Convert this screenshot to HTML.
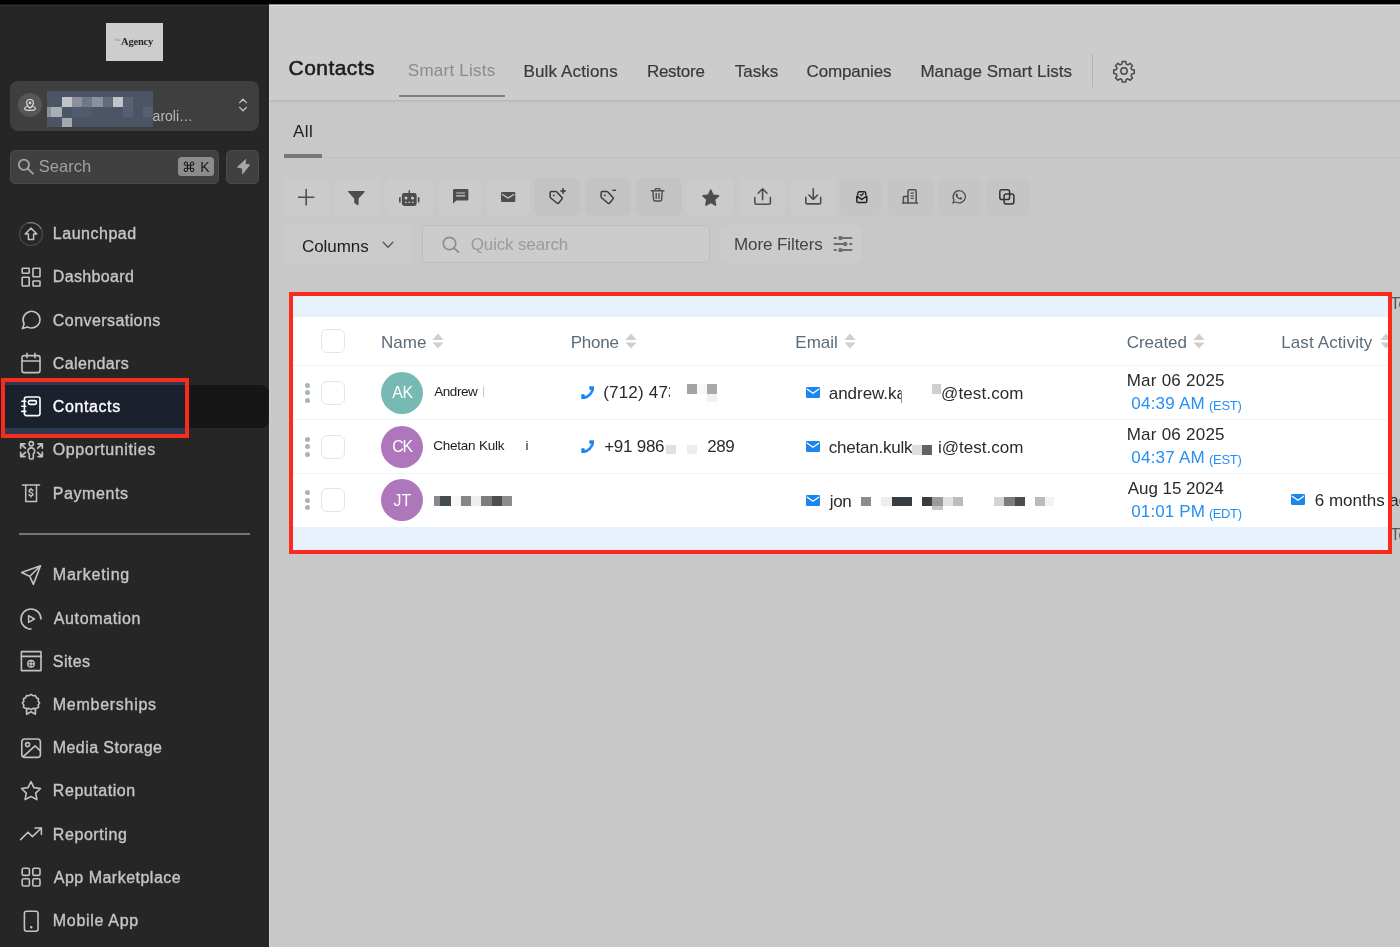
<!DOCTYPE html>
<html lang="en">
<head>
<meta charset="utf-8">
<title>Contacts</title>
<style>
*{box-sizing:border-box;margin:0;padding:0}
html,body{width:1400px;height:947px;overflow:hidden}
body{font-family:"Liberation Sans",sans-serif;background:#c8c8c8;position:relative;color:#1e1e1e}
#wrap{position:absolute;left:0;top:0;width:1400px;height:947px;will-change:transform}
.abs{position:absolute}
#topbar{position:absolute;left:0;top:0;width:1400px;height:4px;background:#000;z-index:50}
/* sidebar */
#side{position:absolute;left:0;top:0;width:269px;height:947px;background:#262626}
#logo{position:absolute;left:106px;top:23px;width:57px;height:38px;background:#cdcdcd;font-family:"Liberation Serif",serif;color:#1f1f1f;text-align:center}
#logo .t{position:absolute;left:15px;top:12.500px;color:#262626;font-size:10.5px;font-weight:bold;letter-spacing:-0.2px;line-height:12px;white-space:nowrap}
#logo .th{position:absolute;left:9px;top:13.500px;font-size:5px;color:#8d8d8d;line-height:6px}
#acct{position:absolute;left:10px;top:80.500px;width:249px;height:50px;background:#3f3f3f;border-radius:8px}
#acct .circ{position:absolute;left:7.800px;top:12px;width:24.500px;height:24.500px;border-radius:50%;background:#565656}
#acct .blur{position:absolute;left:37px;top:10px;width:106px;height:36px;background:#4b5566}
#acct .nm{position:absolute;left:132.500px;top:27px;font-size:14px;color:#b9b9b9;line-height:17px;white-space:nowrap}
#srch{position:absolute;left:10px;top:149.500px;width:209px;height:34px;background:#404040;border:1px solid #4b4b4b;border-radius:5px}
#srch .ph{position:absolute;left:28px;top:5.300px;font-size:16.5px;line-height:20px;color:#a0a0a0}
#srch .kbd{position:absolute;left:167px;top:6.200px;width:36px;height:19.500px;background:#8c8c8c;border-radius:3.500px;color:#161616;font-size:14px;line-height:20px;text-align:center;white-space:nowrap}
#flash{position:absolute;left:226px;top:149.500px;width:33px;height:34px;background:#404040;border:1px solid #4b4b4b;border-radius:5px}
.nav{position:absolute;left:0;width:269px;height:43px;color:#c6c6c6;font-size:16px;line-height:43px;white-space:nowrap}
.nav .lb{position:absolute;left:53px;top:0;-webkit-text-stroke:0.35px currentColor;letter-spacing:0.15px}
.nav svg{position:absolute;left:19px;top:9.500px;width:24px;height:24px;stroke:#c2c2c2;fill:none;stroke-width:1.6;stroke-linecap:round;stroke-linejoin:round}
.nav.act{background:#161616;border-radius:0 8px 8px 0;color:#fff}
.nav.act svg{stroke:#fff}
#sdiv{position:absolute;left:19px;top:533px;width:231px;height:2px;background:#757575}
.hl{position:absolute;border:3px solid #f0281e;z-index:40}
/* main */
#hdr{position:absolute;left:269px;top:4px;width:1131px;height:96px;background:#cccccc;box-shadow:0 1px 3px rgba(0,0,0,0.12)}

#hdr .ttl{position:absolute;left:20px;top:52px;font-size:21px;line-height:24px;color:#1c1c1c;-webkit-text-stroke:0.550px #1c1c1c;white-space:nowrap}
.tab{position:absolute;top:58px;font-size:17px;line-height:20px;color:#3a3a3a;white-space:nowrap;-webkit-text-stroke:0.2px currentColor}
.tab.on{color:#8b8b8b;top:56.500px;-webkit-text-stroke:0}
#hdr .ul{position:absolute;left:130px;top:90.500px;width:106px;height:2px;background:#7d7d7d}
#hdr .sep{position:absolute;left:823px;top:50px;width:1px;height:33px;background:#b3b3b3}
#hdr svg.gear{position:absolute;left:843px;top:55.300px;width:24px;height:24px;fill:none;stroke:#4a4a4a;stroke-width:1.500;stroke-linejoin:round;stroke-linecap:round}
#all{position:absolute;left:293px;top:121.500px;font-size:17px;line-height:20px;color:#222}
#allul{position:absolute;left:284px;top:153.500px;width:38px;height:4px;background:#787878}
#allln{position:absolute;left:284px;top:157px;width:1116px;height:1px;background:#bfbfbf}
.tb{position:absolute;top:177.600px;height:38px;background:#cbcbcb;border-radius:7px}
.tb.dk{background:#c3c3c3}
.tb svg{position:absolute;overflow:visible}
#cols{position:absolute;left:284px;top:225px;width:128px;height:38px;background:#cbcbcb;border-radius:6px}
#cols span{position:absolute;left:19px;top:12px;font-size:17px;line-height:20px;color:#1c1c1c}
#qs{position:absolute;left:422px;top:225px;width:288px;height:38px;background:#cccccc;border:1px solid #bcbcbc;border-radius:5px}
#qs span{position:absolute;left:48px;top:9px;font-size:17px;line-height:20px;color:#9a9a9a;white-space:nowrap}
#mf{position:absolute;left:720px;top:225px;width:142px;height:38px;background:#cbcbcb;border-radius:6px}
#mf span{position:absolute;left:14px;top:9.500px;font-size:17px;line-height:20px;color:#444;white-space:nowrap}
/* table */
#tbl{position:absolute;left:293px;top:296px;width:1095px;height:254px;background:#fff;overflow:hidden}
#tbl .band{position:absolute;left:0;width:1095px;background:#e8f2fc}
#tbl .ln{position:absolute;left:0;width:1095px;height:1.500px;background:#edf3f8}
.th{position:absolute;top:37px;font-size:17px;line-height:20px;color:#5a6b7b;white-space:nowrap}
.srt{position:absolute;top:37px;width:12px;height:16px}
.cb{position:absolute;left:28px;width:24px;height:24px;border:1px solid #dfe4ee;border-radius:6px;background:#fff}
.dots{position:absolute;left:12px;width:5px;height:20px}
.dots i{position:absolute;left:0;width:5px;height:5px;border-radius:50%;background:#aab4b4}
.av{position:absolute;left:88px;width:42px;height:42px;border-radius:50%;color:#fff;font-size:17px;line-height:42px;text-align:center}
.nm2{position:absolute;left:140px;font-size:13.500px;line-height:16px;color:#1c1c1c;white-space:nowrap}
.tx{margin-top:1px;position:absolute;font-size:17px;line-height:20px;color:#2a2a2a;white-space:nowrap}
.bl{color:#2490f3}
.sm{font-size:13px}
.px{position:absolute}
.hl2{position:absolute;left:289px;top:292px;width:1103px;height:262px;border:4px solid #fa2a1c;z-index:30}

#hl1{position:absolute;left:1px;top:378px;width:187.500px;height:60px;border:4px solid #fa2a1c;border-top-width:4.500px;z-index:5}
#hl1 .in{position:absolute;left:0;top:0;width:179.500px;height:51.500px;background:#2d3a4f;overflow:hidden}
#hl1 .act2{position:absolute;left:0;top:2.500px;width:179.500px;height:43px;background:#1a202c}
#hl1 svg{position:absolute;left:14px;top:12px;width:24px;height:24px;stroke:#fff;fill:none;stroke-width:1.600;stroke-linecap:round;stroke-linejoin:round}
#hl1 .lb2{position:absolute;left:48px;top:2.500px;font-size:16px;line-height:43px;color:#fff;-webkit-text-stroke:0.350px #fff;white-space:nowrap}

#tblx{position:absolute;left:293px;top:296px;width:1107px;height:254px}
.tot{position:absolute;left:1097.500px;font-size:16px;line-height:20px;color:#555;white-space:nowrap}
.av{font-size:15.800px}
.av span{position:relative;top:.7px}
</style>
<style id="fit">
#nv1{letter-spacing:0.524px;margin-left:-0.2px}
#nv2{letter-spacing:0.35px;margin-left:-0.2px}
#nv3{letter-spacing:0.433px;margin-left:-0.2px}
#nv4{letter-spacing:0.375px;margin-left:-0.2px}
#nv5{letter-spacing:0.629px;margin-left:-0.4px}
#nv6{letter-spacing:0.6px;margin-left:-0.2px}
#nv7{letter-spacing:0.572px;margin-left:-0.2px}
#nv8{letter-spacing:0.774px;margin-left:-0.2px}
#nv9{letter-spacing:0.622px;margin-left:0.8px}
#nv10{letter-spacing:0.4px;margin-left:-0.2px}
#nv11{letter-spacing:0.72px;margin-left:-0.2px}
#nv12{letter-spacing:0.417px;margin-left:-0.2px}
#nv13{letter-spacing:0.555px;margin-left:-0.2px}
#nv14{letter-spacing:0.575px;margin-left:-0.2px}
#nv15{letter-spacing:0.486px;margin-left:0.8px}
#nv16{letter-spacing:0.689px;margin-left:-0.2px}
#ttl{letter-spacing:0.429px;margin-left:-0.4px}
#t1{letter-spacing:0.24px;margin-left:-1.2px}
#all{letter-spacing:0.4px;margin-left:0.0px}
#colt{letter-spacing:-0.066px;margin-left:-1.0px}
#qst{letter-spacing:-0.163px;margin-left:-0.2px}
#mft{letter-spacing:-0.09px;margin-left:0.0px}
#th1{letter-spacing:0.067px;margin-left:-1.0px}
#th2{letter-spacing:-0.25px;margin-left:-0.8px}
#th3{letter-spacing:0.0px;margin-left:-1.2px}
#th4{letter-spacing:-0.067px;margin-left:-1.2px}
#th5{letter-spacing:0.117px;margin-left:-0.8px}
#n1{letter-spacing:-0.44px;margin-left:1.2px}
#n2{letter-spacing:-0.22px;margin-left:0.2px}
#p2a{letter-spacing:-0.267px;margin-left:-0.2px}
#p2b{letter-spacing:-0.4px;margin-left:-0.2px}
#e1b{letter-spacing:0.124px;margin-left:-1.0px}
#e2a{letter-spacing:-0.22px;margin-left:-0.2px}
#e2b{letter-spacing:0.022px;margin-left:-1.0px}
#e3a{letter-spacing:-0.3px;margin-left:0.8px}
#c1a{letter-spacing:0.24px;margin-left:-1.2px}
#c1b{letter-spacing:0.228px;margin-left:-0.8px}
#c1c{letter-spacing:-0.25px;margin-left:-0.4px}
#c2a{letter-spacing:0.24px;margin-left:-1.2px}
#c2b{letter-spacing:0.228px;margin-left:-0.8px}
#c2c{letter-spacing:-0.25px;margin-left:-0.4px}
#c3a{letter-spacing:-0.04px;margin-left:-0.2px}
#c3b{letter-spacing:0.114px;margin-left:-0.8px}
#c3c{letter-spacing:-0.4px;margin-left:-0.4px}
#sph{letter-spacing:0.0px;margin-left:-0.2px}
#t2{letter-spacing:0.145px;margin-left:-1.0px}
#t3{letter-spacing:-0.266px;margin-left:-0.6px}
#t4{letter-spacing:0.05px;margin-left:0.2px}
#t5{letter-spacing:-0.125px;margin-left:-1.0px}
#t6{letter-spacing:0.024px;margin-left:-0.6px}
#nv5b{letter-spacing:0.6px;margin-left:-0.2px}
#p1{letter-spacing:0.2px;margin-left:-1.2px}
#e1a{letter-spacing:-0.025px;margin-left:-0.2px}
#la3{letter-spacing:0.0px;margin-left:-0.2px}
#av1{letter-spacing:-0.2px;margin-left:1px}
#av2{letter-spacing:-1.2px;margin-left:0px}
#av3{letter-spacing:0.2px;margin-left:0.8px}
</style>
</head>
<body>
<div id="wrap">
<div id="side">
  <div id="logo"><span class="th">the</span><span class="t">Agency</span></div>
  <div id="acct">
    <div class="circ"></div>
    <svg class="px" viewBox="0 0 12 12" style="left:14px;top:18.800px;width:12px;height:12px;fill:none;stroke:#dadada;stroke-width:1.150;stroke-linejoin:round;stroke-linecap:round"><path d="M6 9.300C6 9.300 9.400 6.400 9.400 3.900a3.400 3.400 0 0 0-6.800 0C2.600 6.400 6 9.300 6 9.300z"/><circle cx="6" cy="3.900" r=".8" fill="#dadada"/><path d="M3.300 7.500C1.700 7.900.6 8.600.6 9.400c0 1.200 2.400 2 5.400 2s5.400-.8 5.400-2c0-.8-1.100-1.500-2.700-1.900"/></svg>
    <div class="nm" id="anm">Caroli…</div>
    <div class="blur"></div><i class="px" style="left:51.6px;top:16.2px;width:10.4px;height:10.6px;background:#c2c4ca"></i><i class="px" style="left:62.0px;top:16.2px;width:10.0px;height:10.6px;background:#8b909c"></i><i class="px" style="left:72.0px;top:16.2px;width:10.0px;height:10.6px;background:#70778a"></i><i class="px" style="left:82.0px;top:16.2px;width:10.5px;height:10.6px;background:#8b909c"></i><i class="px" style="left:92.5px;top:16.2px;width:10.5px;height:10.6px;background:#626a7b"></i><i class="px" style="left:103.0px;top:16.2px;width:10.0px;height:10.6px;background:#c2c4ca"></i><i class="px" style="left:113.0px;top:16.2px;width:10.0px;height:10.6px;background:#596174"></i><i class="px" style="left:37.0px;top:26.8px;width:4.0px;height:10.2px;background:#8c919d"></i><i class="px" style="left:41.0px;top:26.8px;width:10.6px;height:10.2px;background:#a9adb6"></i><i class="px" style="left:62.0px;top:26.8px;width:20.0px;height:10.2px;background:#515b6c"></i><i class="px" style="left:113.0px;top:26.8px;width:10.0px;height:10.2px;background:#566072"></i><i class="px" style="left:133.0px;top:26.8px;width:10.0px;height:10.2px;background:#566072"></i><i class="px" style="left:51.6px;top:37.0px;width:10.4px;height:9.0px;background:#a4a8b1"></i>
    <svg class="px" viewBox="0 0 10 16" style="left:227.500px;top:16px;width:10px;height:16px;fill:none;stroke:#c4c4c4;stroke-width:1.300;stroke-linecap:round;stroke-linejoin:round"><path d="M1.600 5.600 5 2.200l3.400 3.400M1.600 10.400 5 13.800l3.400-3.400"/></svg>
  </div>
  <div id="srch"><svg class="px" viewBox="0 0 17 17" style="left:6px;top:7.500px;width:17px;height:17px;fill:none;stroke:#a6a6a6;stroke-width:1.800;stroke-linecap:round"><circle cx="6.900" cy="6.800" r="5.100"/><path d="M10.700 10.700 16 15.700"/></svg><span class="ph" id="sph">Search</span><span class="kbd">⌘ K</span></div>
  <div id="flash"><svg class="px" viewBox="0 0 13 15.500" style="left:9.500px;top:8.300px;width:13px;height:15.500px"><path d="M8.600.600 .4 8.200 5.400 9.200 5.500 14.900 12.700 5.900 8.100 5z" fill="#a9a9a9" stroke="#a9a9a9" stroke-width=".8" stroke-linejoin="round"/></svg></div>

  <div class="nav" style="top:212px"><svg viewBox="0 0 24 24"><circle cx="12" cy="12" r="11.4" stroke="#4b4b4b" stroke-width="1.2"/><path d="M9 1A11.4 11.4 0 0 1 21.900 6.400" stroke="#7c7c7c" stroke-width="1.2"/><path d="M12 6 6.200 12h3.200v5.600h5.200V12h3.200z" stroke-width="1.500"/></svg><span class="lb" id="nv1">Launchpad</span></div>
  <div class="nav" style="top:255.25px"><svg viewBox="0 0 24 24"><rect x="3.2" y="3.2" width="7" height="5" rx=".6"/><rect x="14" y="3.2" width="7" height="8.6" rx=".6"/><rect x="3.2" y="12.2" width="7" height="8.8" rx=".6"/><rect x="14" y="16" width="7" height="5" rx=".6"/></svg><span class="lb" id="nv2">Dashboard</span></div>
  <div class="nav" style="top:298.5px"><svg viewBox="0 0 24 24"><path d="M21 11.5a8.5 8.5 0 0 1-12.6 7.4L3.4 20.6l1.7-4.6A8.5 8.5 0 1 1 21 11.5z"/></svg><span class="lb" id="nv3">Conversations</span></div>
  <div class="nav" style="top:341.75px"><svg viewBox="0 0 24 24"><rect x="3" y="4.6" width="18" height="17" rx="2.2"/><path d="M3 10h18M8 2.4v4.4M16 2.4v4.4"/></svg><span class="lb" id="nv4">Calendars</span></div>
  <div class="nav act" style="top:385px"><svg viewBox="0 0 24 24"><rect x="5.4" y="3" width="15.6" height="18.6" rx="2"/><rect x="9.4" y="6.6" width="8" height="3.8" rx="1.6"/><path d="M2.8 7.2h4M2.8 12.3h4M2.8 17.4h4"/></svg><span class="lb" id="nv5">Contacts</span></div>
  <div class="nav" style="top:428.25px"><svg viewBox="0 0 24 24" style="stroke-width:1.600;overflow:visible"><circle cx="12.300" cy="5.800" r="2.150"/><path d="M8.900 13.300a3.400 3.400 0 0 1 6.800 0c0 1.200-.6 2-1.400 2.600v4.100c0 .6-.4 1-1 1h-2c-.6 0-1-.4-1-1v-4.100c-.8-.6-1.400-1.400-1.400-2.600z"/><path d="M1.700 10V5.800h4.200M2 6.100 6.400 10.200M23.300 10V5.800h-4.200M23 6.100 18.600 10.200M1.700 14.400v4.200h4.200M2 18.300 6.400 14.400M23.300 14.400v4.200h-4.200M23 18.300 18.600 14.400" stroke-width="1.750"/></svg><span class="lb" id="nv6">Opportunities</span></div>
  <div class="nav" style="top:471.5px"><svg viewBox="0 0 24 24" style="stroke-width:1.5"><path d="M3.400 4h17.200M6.700 4.400v16h10.800v-16"/><path d="M13.800 9.600c-.4-.8-1.100-1.100-1.900-1.100-1 0-1.800.6-1.800 1.500 0 2.200 3.800 1.100 3.800 3.300 0 .9-.9 1.500-1.900 1.500-.9 0-1.600-.4-2-1.200M12 7.400v1.100M12 14.800v1.100"/></svg><span class="lb" id="nv7">Payments</span></div>
  <div id="hl1"><div class="in"><div class="act2"></div><svg viewBox="0 0 24 24"><rect x="5.400" y="3" width="15.600" height="18.600" rx="2"/><rect x="9.400" y="6.600" width="8" height="3.800" rx="1.600"/><path d="M2.800 7.200h4M2.800 12.300h4M2.800 17.400h4"/></svg><span class="lb2" id="nv5b">Contacts</span></div></div>
  <div id="sdiv"></div>
  <div class="nav" style="top:553px"><svg viewBox="0 0 24 24"><path d="M21.500 2.800 2.600 9.600l8.100 3.600 3.700 8.200zM21.300 3 10.800 13.200"/></svg><span class="lb" id="nv8">Marketing</span></div>
  <div class="nav" style="top:597px"><svg viewBox="0 0 24 24"><path d="M22 12A10 10 0 0 0 12 2 10 10 0 0 0 2 12a10 10 0 0 0 10 10"/><path d="M9.600 8.600v6.800l5.800-3.400z" stroke-width="1.5"/></svg><span class="lb" id="nv9">Automation</span></div>
  <div class="nav" style="top:639.5px"><svg viewBox="0 0 24 24"><rect x="2.400" y="2.600" width="19.600" height="19" rx=".4"/><path d="M2.400 7.400h19.600"/><circle cx="12" cy="14.800" r="3.300" stroke-width="1.300"/><path d="M8.700 14.800h6.600M12 11.500v6.600" stroke-width="1.300"/></svg><span class="lb" id="nv10">Sites</span></div>
  <div class="nav" style="top:682.75px"><svg viewBox="0 0 24 24"><path d="M12 2.400l2 1.300 2.400-.2 1 2.200 2.100 1.100-.3 2.400L20.600 11l-1.400 1.900.3 2.400-2.100 1.100-1 .2-2.400-.2-2 1.300-2-1.300-2.400.2-1-.2-2.100-1.100.3-2.400L3.400 11l1.400-1.800-.3-2.400 2.100-1.100 1-2.200 2.400.2z"/><path d="M7.600 16.800v5.400l4.400-2.400 4.400 2.400v-5.400"/></svg><span class="lb" id="nv11">Memberships</span></div>
  <div class="nav" style="top:726px"><svg viewBox="0 0 24 24"><rect x="2.800" y="3" width="18.600" height="18.400" rx="3"/><circle cx="8.600" cy="8.600" r="2"/><path d="M4.600 20.400 16 9.800l5.400 5"/></svg><span class="lb" id="nv12">Media Storage</span></div>
  <div class="nav" style="top:769.25px"><svg viewBox="0 0 24 24"><path d="M12 2.600l2.900 6 6.600.9-4.800 4.600 1.200 6.500L12 17.500l-5.900 3.100 1.200-6.500L2.500 9.500l6.600-.9z"/></svg><span class="lb" id="nv13">Reputation</span></div>
  <div class="nav" style="top:812.5px"><svg viewBox="0 0 24 24"><path d="M1.600 17.600 9 10.200l4.400 4.400L22.400 6M16 6h6.400v6.400"/></svg><span class="lb" id="nv14">Reporting</span></div>
  <div class="nav" style="top:855.75px"><svg viewBox="0 0 24 24"><rect x="3.200" y="3.200" width="7.200" height="7.200" rx="1.400"/><rect x="13.800" y="3.200" width="7.200" height="7.200" rx="1.400"/><rect x="3.200" y="13.800" width="7.200" height="7.200" rx="1.400"/><rect x="13.800" y="13.800" width="7.200" height="7.200" rx="1.400"/></svg><span class="lb" id="nv15">App Marketplace</span></div>
  <div class="nav" style="top:899px"><svg viewBox="0 0 24 24"><rect x="5.400" y="2.200" width="13.600" height="20" rx="2.200"/><path d="M12.200 18.200h.01" stroke-width="2.400"/></svg><span class="lb" id="nv16">Mobile App</span></div>
</div>

<div id="hdr">
  <div class="ttl" id="ttl">Contacts</div>
  <div class="tab on" id="t1" style="left:140px">Smart Lists</div>
  <div class="tab" id="t2" style="left:255.500px">Bulk Actions</div>
  <div class="tab" id="t3" style="left:378.500px">Restore</div>
  <div class="tab" id="t4" style="left:465.500px">Tasks</div>
  <div class="tab" id="t5" style="left:538.500px">Companies</div>
  <div class="tab" id="t6" style="left:652px">Manage Smart Lists</div>
  <div class="ul"></div>
  <div class="sep"></div>
  <svg class="gear" viewBox="0 0 24 24"><circle cx="12" cy="12" r="3.200"/><path d="M10.300 2.500h3.400l.5 2.600 1.700.7 2.200-1.500 2.400 2.400-1.500 2.200.7 1.700 2.600.5v3.400l-2.600.5-.7 1.700 1.500 2.200-2.400 2.400-2.200-1.500-1.700.7-.5 2.600h-3.400l-.5-2.600-1.700-.7-2.200 1.500-2.400-2.400 1.500-2.200-.7-1.700-2.600-.5v-3.400l2.600-.5.7-1.700-1.500-2.200 2.400-2.400 2.200 1.500 1.700-.7z"/></svg>
</div>
<div id="all">All</div>
<div id="allln"></div>
<div id="allul"></div>
<div id="toolbar">
  <div class="tb" id="b1" style="left:283.5px;width:46.0px;background:#cbcbcb"><svg viewBox="0 0 16 16" style="left:14.5px;top:11.1px;width:16.4px;height:16.4px"><path d="M8 0v16M0 8h16" stroke="#4d4d4d" stroke-width="1.500" fill="none"/></svg></div>
  <div class="tb" id="b2" style="left:334.0px;width:46.3px;background:#cbcbcb"><svg viewBox="0 0 17 14.500" style="left:14.2px;top:13.0px;width:16.8px;height:14.4px"><path d="M.6 0h15.800c.5 0 .7.500.4.900L10.700 7.600v5.900c0 .7-.7 1.100-1.300.7L6.800 12.400c-.3-.2-.5-.5-.5-.9V7.600L.2.900C-.1.500.1 0 .6 0z" fill="#4d4d4d"/></svg></div>
  <div class="tb" id="b3" style="left:384.5px;width:48.7px;background:#cbcbcb"><svg viewBox="0 0 20.500 16" style="left:14.3px;top:12.4px;width:20.5px;height:16.0px"><path d="M10.250 0a.7.700 0 0 1 .7.700V3h4.300a2.400 2.400 0 0 1 2.400 2.400v8.200a2.400 2.400 0 0 1-2.400 2.400h-10a2.400 2.400 0 0 1-2.400-2.400V5.400A2.400 2.400 0 0 1 5.250 3h4.300V.7a.7.700 0 0 1 .7-.7z" fill="#4d4d4d"/><rect x="0" y="7" width="1.700" height="5.500" rx=".85" fill="#4d4d4d"/><rect x="18.800" y="7" width="1.700" height="5.500" rx=".85" fill="#4d4d4d"/><circle cx="7" cy="8" r="1.500" fill="#cbcbcb"/><circle cx="13.500" cy="8" r="1.500" fill="#cbcbcb"/><path d="M6 12.400h1.600M9.450 12.400h1.600M12.900 12.400h1.600" stroke="#cbcbcb" stroke-width="1.300"/></svg></div>
  <div class="tb" id="b4" style="left:438.0px;width:44.4px;background:#cbcbcb"><svg viewBox="0 0 15.400 14.800" style="left:14.7px;top:11.4px;width:15.4px;height:14.8px"><path d="M1.400 0h12.600c.8 0 1.400.6 1.400 1.400v8.800c0 .8-.6 1.400-1.400 1.400H3.200L0 14.800V1.400C0 .6.600 0 1.400 0z" fill="#4d4d4d"/><path d="M3.200 4h9M3.200 6.800h9" stroke="#cbcbcb" stroke-width="1.200"/></svg></div>
  <div class="tb" id="b5" style="left:487.0px;width:42.8px;background:#cbcbcb"><svg viewBox="0 0 14.300 10" style="left:14.0px;top:14.8px;width:14.3px;height:10.0px"><rect width="14.300" height="10" rx="1.300" fill="#4d4d4d"/><path d="M1 2.200 7.150 6l6.150-3.800" fill="none" stroke="#cbcbcb" stroke-width="1.300"/></svg></div>
  <div class="tb" id="b6" style="left:534.0px;width:46.1px;background:#c3c3c3"><svg viewBox="0 0 17 17" style="left:15.0px;top:10.4px;width:17px;height:17px"><path d="M1.100 5Q1.100 3.600 2.500 3.550L6.600 3.400Q7.200 3.400 7.600 3.800L13 9.500Q13.600 10.200 13 10.900L9.500 15.200Q8.800 15.900 8.100 15.300L1.500 9.700Q1.100 9.400 1.100 8.800Z" fill="none" stroke="#3a3a3a" stroke-width="1.500" stroke-linejoin="round"/><circle cx="4.800" cy="7.300" r=".9" fill="#3a3a3a"/><path d="M14.100.300v5.400M11.400 3h5.400" stroke="#3a3a3a" stroke-width="1.600" fill="none"/></svg></div>
  <div class="tb" id="b7" style="left:585.3px;width:45.9px;background:#c3c3c3"><svg viewBox="0 0 17 17" style="left:14.5px;top:10.4px;width:17px;height:17px"><path d="M1.100 5Q1.100 3.600 2.500 3.550L6.600 3.400Q7.200 3.400 7.600 3.800L13 9.500Q13.600 10.200 13 10.900L9.500 15.200Q8.800 15.900 8.100 15.300L1.500 9.700Q1.100 9.400 1.100 8.800Z" fill="none" stroke="#3a3a3a" stroke-width="1.500" stroke-linejoin="round"/><circle cx="4.800" cy="7.300" r=".9" fill="#3a3a3a"/><path d="M12.200 2.300h3.800" stroke="#3a3a3a" stroke-width="1.300" fill="none"/></svg></div>
  <div class="tb" id="b8" style="left:635.8px;width:46.5px;background:#c3c3c3"><svg viewBox="0 0 13.200 13.600" style="left:15.2px;top:10.7px;width:13.2px;height:13.6px"><path d="M.2 2.800h12.800M4.300 2.600V1.200c0-.4.300-.6.600-.6h3.400c.3 0 .6.200.6.600v1.400M1.900 3l.7 8.800c.1.700.6 1.200 1.300 1.200h5.400c.7 0 1.200-.5 1.300-1.200L11.300 3M5.200 5.400v5M8 5.400v5" fill="none" stroke="#4d4d4d" stroke-width="1.400" stroke-linecap="round"/></svg></div>
  <div class="tb" id="b9" style="left:687.0px;width:47.3px;background:#cbcbcb"><svg viewBox="0 0 17.500 17.100" style="left:15.3px;top:11.7px;width:17.5px;height:17.1px"><path d="M8.750.3c.3 0 .6.200.7.500l2.100 4.600 5 .6c.7.100 1 .9.500 1.400l-3.700 3.400 1 5c.1.700-.6 1.200-1.200.9l-4.400-2.500-4.400 2.500c-.6.300-1.300-.2-1.200-.9l1-5L.45 7.400c-.5-.5-.2-1.300.5-1.400l5-.6L8.050.8c.1-.3.400-.5.700-.5z" fill="#4d4d4d"/></svg></div>
  <div class="tb" id="b10" style="left:739.5px;width:45.8px;background:#cbcbcb"><svg viewBox="0 0 17.200 17.100" style="left:14.3px;top:10.7px;width:17.2px;height:17.1px"><path d="M.8 9.600v5.200c0 .8.700 1.500 1.500 1.500h12.600c.8 0 1.500-.7 1.500-1.500V9.600M8.600 11.800V1M4.200 5.200 8.600.8 13 5.200" fill="none" stroke="#4d4d4d" stroke-width="1.600" stroke-linecap="round" stroke-linejoin="round"/></svg></div>
  <div class="tb" id="b11" style="left:790.2px;width:45.5px;background:#cbcbcb"><svg viewBox="0 0 16.500 16.700" style="left:14.5px;top:10.7px;width:16.5px;height:16.7px"><path d="M.8 9.400v5c0 .8.700 1.500 1.500 1.500h11.900c.8 0 1.500-.7 1.500-1.500v-5M8.250.8v10.400M3.900 7l4.350 4.400L12.600 7" fill="none" stroke="#4d4d4d" stroke-width="1.600" stroke-linecap="round" stroke-linejoin="round"/></svg></div>
  <div class="tb" id="b12" style="left:840.4px;width:41.7px;background:#c5c5c5"><svg viewBox="0 0 11.600 12.400" style="left:15.2px;top:13.4px;width:11.6px;height:12.4px"><path d="M1.800 4.600V2.400c0-.9.700-1.600 1.600-1.600h4.800c.9 0 1.600.7 1.600 1.600v2.200" fill="none" stroke="#222" stroke-width="1.400"/><path d="M.8 5.200v5c0 .8.600 1.400 1.400 1.400h7.200c.8 0 1.400-.6 1.400-1.400v-5L5.800 8.400z" fill="none" stroke="#222" stroke-width="1.500" stroke-linejoin="round"/><path d="M4.100 3.400 5.400 4.700 7.700 2.300" fill="none" stroke="#222" stroke-width="1.300"/></svg></div>
  <div class="tb" id="b13" style="left:887.7px;width:46.1px;background:#c5c5c5"><svg viewBox="0 0 16.100 14.600" style="left:14.7px;top:11.2px;width:16.1px;height:14.6px"><path d="M0 13.900h16.100M1.400 13.800V8.200c0-.4.300-.8.700-.8h3.800v6.400M6 13.800V2.200c0-.8.600-1.400 1.400-1.400h5.400c.8 0 1.400.6 1.400 1.400v11.600" fill="none" stroke="#4d4d4d" stroke-width="1.500"/><path d="M8.600 4.200h3.200M8.600 6.800h3.200M8.600 9.400h3.200" stroke="#4d4d4d" stroke-width="1.300"/></svg></div>
  <div class="tb" id="b14" style="left:938.2px;width:42.4px;background:#c5c5c5"><svg viewBox="0 0 14 13.800" style="left:14.3px;top:12.4px;width:14.0px;height:13.8px"><path d="M7.200.7a6.100 6.100 0 0 0-5.200 9.300L.9 13l3.200-1a6.100 6.100 0 1 0 3.100-11.300z" fill="none" stroke="#4d4d4d" stroke-width="1.300" stroke-linejoin="round"/><path d="M5.300 3.800c-.2-.4-.4-.4-.6-.4-.5 0-1.100.6-1.100 1.500 0 1 .7 2 1.300 2.700.7.800 1.700 1.600 3 2 .9.300 1.600 0 2-.5.200-.3.300-.8.200-1-.1-.2-1.300-.8-1.500-.8-.2 0-.4.500-.7.700-.2.100-.4 0-.8-.2-.5-.3-1.300-1-1.600-1.700-.1-.3.400-.6.500-.9.100-.2-.4-1.100-.7-1.400z" fill="#4d4d4d"/></svg></div>
  <div class="tb" id="b15" style="left:985.8px;width:44.0px;background:#c5c5c5"><svg viewBox="0 0 15.700 15.700" style="left:13.7px;top:11.4px;width:15.7px;height:15.7px"><rect x=".8" y=".8" width="9.800" height="9.800" rx="2.200" fill="none" stroke="#333" stroke-width="1.500"/><rect x="5.100" y="5.100" width="9.800" height="9.800" rx="2.200" fill="none" stroke="#333" stroke-width="1.500"/></svg></div>
</div>
<div id="cols"><span id="colt">Columns</span><svg class="px" viewBox="0 0 12 8" style="left:98px;top:16px;width:12px;height:8px;fill:none;stroke:#555;stroke-width:1.300;stroke-linecap:round;stroke-linejoin:round"><path d="M1.200 1.300 6 6.300l4.800-5"/></svg></div>
<div id="qs"><svg class="px" viewBox="0 0 18 17" style="left:18.500px;top:10px;width:18px;height:17px;fill:none;stroke:#8d8d8d;stroke-width:1.700;stroke-linecap:round"><circle cx="7.500" cy="7.500" r="6.200"/><path d="M12.100 12.100 16.400 16"/></svg><span id="qst">Quick search</span></div>
<div id="mf"><span id="mft">More Filters</span><svg class="px" viewBox="0 0 20 16" style="left:112.700px;top:11.300px;width:20px;height:16px;fill:#6e6e6e;stroke:#6e6e6e;stroke-width:2;stroke-linecap:round"><path d="M1.500 2h1.500M7.500 2h11M1.500 8h11M17 8h1.500M1.500 14.100h1.500M7.500 14.100h11" fill="none"/><circle cx="7.400" cy="2" r="1.500" stroke-width="1.400"/><circle cx="12.300" cy="8" r="1.500" stroke-width="1.400"/><circle cx="7.400" cy="14.100" r="1.500" stroke-width="1.400"/></svg></div>

<div id="tbl">
  <div class="band" style="top:0;height:21px"></div>
  <div class="band" style="top:230.600px;height:24px"></div>
  <div class="ln" style="top:68.500px"></div>
  <div class="ln" style="top:122.500px"></div>
  <div class="ln" style="top:176.500px"></div>
  <div class="cb" style="top:33px"></div>
  <div class="th" id="th1" style="left:89px">Name</div>
  <div class="th" id="th2" style="left:278.500px">Phone</div>
  <div class="th" id="th3" style="left:503.500px">Email</div>
  <div class="th" id="th4" style="left:835px">Created</div>
  <div class="th" id="th5" style="left:989px">Last Activity</div>
<div class="dots" style="top:86.6px"><i style="top:0"></i><i style="top:7.500px"></i><i style="top:15px"></i></div><div class="cb" style="top:84.6px"></div><div class="av" style="top:75.6px;background:#76bab3"><span id="av1">AK</span></div><span class="nm2" id="n1" style="top:88.1px">Andrew</span><i class="px" style="left:190.2px;top:90.0px;width:1.0px;height:11.0px;background:#c9c9c9"></i><svg class="px" viewBox="0 0 13.500 13.500" style="left:287.800px;top:89.7px;width:13.500px;height:13.500px"><path d="M13.300.700A13.300 13.300 0 0 1 .700 13.300L.500 8.800A8.800 8.800 0 0 0 3 8.300L3.900 10.600A11.300 11.300 0 0 0 10.600 3.900L8.300 3A8.800 8.800 0 0 0 8.800.500Z" fill="#1a86f5" stroke="#1a86f5" stroke-width=".6" stroke-linejoin="round"/></svg><span class="tx" id="p1" style="left:311.4px;top:86.3px;width:67px;overflow:hidden">(712) 473</span><i class="px" style="left:393.6px;top:88.0px;width:10.4px;height:9.6px;background:#a3a3a3"></i><i class="px" style="left:404.0px;top:88.0px;width:10.0px;height:9.6px;background:#f8f8f8"></i><i class="px" style="left:414.0px;top:88.0px;width:10.0px;height:9.6px;background:#a9a9a9"></i><i class="px" style="left:414.0px;top:97.6px;width:10.0px;height:8.4px;background:#f0f0f0"></i><svg class="px" viewBox="0 0 14 11" style="left:512.5px;top:91.1px;width:14px;height:11px"><rect width="14" height="11" rx="1.300" fill="#1c86f0"/><path d="M1.300 2.200 7 6.200l5.700-4" fill="none" stroke="#fff" stroke-width="1.300" stroke-linecap="round" stroke-linejoin="round"/></svg><span class="tx" id="e1a" style="left:535.9px;top:86.7px;width:72.400px;overflow:hidden">andrew.ka</span><i class="px" style="left:608.0px;top:95.0px;width:1.0px;height:12.0px;background:#8a8a8a"></i><i class="px" style="left:639.4px;top:87.7px;width:8.5px;height:9.9px;background:#cfcfcf"></i><span class="tx" id="e1b" style="left:649.0px;top:86.7px;">@test.com</span><span class="tx" id="c1a" style="left:834.9px;top:74.2px;">Mar 06 2025</span><span class="tx bl" id="c1b" style="left:839.1px;top:97.4px;">04:39 AM</span><span class="tx bl sm" id="c1c" style="left:916.3px;top:98.8px">(EST)</span><div class="dots" style="top:140.5px"><i style="top:0"></i><i style="top:7.500px"></i><i style="top:15px"></i></div><div class="cb" style="top:138.5px"></div><div class="av" style="top:129.5px;background:#ae76bb"><span id="av2">CK</span></div><span class="nm2" id="n2" style="top:142.0px">Chetan Kulk</span><span class="nm2" id="n2b" style="left:232.500px;top:142.0px">i</span><svg class="px" viewBox="0 0 13.500 13.500" style="left:287.800px;top:143.6px;width:13.500px;height:13.500px"><path d="M13.300.700A13.300 13.300 0 0 1 .700 13.300L.500 8.800A8.800 8.800 0 0 0 3 8.300L3.900 10.600A11.300 11.300 0 0 0 10.600 3.900L8.300 3A8.800 8.800 0 0 0 8.800.500Z" fill="#1a86f5" stroke="#1a86f5" stroke-width=".6" stroke-linejoin="round"/></svg><span class="tx" id="p2a" style="left:311.4px;top:140.2px;">+91 986</span><i class="px" style="left:372.6px;top:149.0px;width:10.4px;height:8.6px;background:#e0e0e0"></i><i class="px" style="left:393.6px;top:149.0px;width:10.4px;height:8.6px;background:#ededed"></i><span class="tx" id="p2b" style="left:414.4px;top:140.2px;">289</span><svg class="px" viewBox="0 0 14 11" style="left:512.5px;top:145.0px;width:14px;height:11px"><rect width="14" height="11" rx="1.300" fill="#1c86f0"/><path d="M1.300 2.200 7 6.200l5.700-4" fill="none" stroke="#fff" stroke-width="1.300" stroke-linecap="round" stroke-linejoin="round"/></svg><span class="tx" id="e2a" style="left:535.9px;top:140.6px;">chetan.kulk</span><i class="px" style="left:618.8px;top:149.4px;width:9.8px;height:9.6px;background:#dedede"></i><i class="px" style="left:628.6px;top:149.4px;width:10.8px;height:9.6px;background:#636363"></i><span class="tx" id="e2b" style="left:646.0px;top:140.6px;">i@test.com</span><span class="tx" id="c2a" style="left:834.9px;top:128.1px;">Mar 06 2025</span><span class="tx bl" id="c2b" style="left:839.1px;top:151.3px;">04:37 AM</span><span class="tx bl sm" id="c2c" style="left:916.3px;top:152.7px">(EST)</span><div class="dots" style="top:194.4px"><i style="top:0"></i><i style="top:7.500px"></i><i style="top:15px"></i></div><div class="cb" style="top:192.4px"></div><div class="av" style="top:183.4px;background:#ae76bb"><span id="av3">JT</span></div><i class="px" style="left:141.0px;top:200.4px;width:6.0px;height:9.6px;background:#8a8a8a"></i><i class="px" style="left:147.0px;top:200.4px;width:11.0px;height:9.6px;background:#454c50"></i><i class="px" style="left:158.0px;top:200.4px;width:10.0px;height:9.6px;background:#f6f6f6"></i><i class="px" style="left:168.0px;top:200.4px;width:10.0px;height:9.6px;background:#868686"></i><i class="px" style="left:178.0px;top:200.4px;width:10.0px;height:9.6px;background:#eeeeee"></i><i class="px" style="left:188.0px;top:200.4px;width:11.0px;height:9.6px;background:#7d7d7d"></i><i class="px" style="left:199.0px;top:200.4px;width:10.0px;height:9.6px;background:#4a4f52"></i><i class="px" style="left:209.0px;top:200.4px;width:10.0px;height:9.6px;background:#8c8c8c"></i><svg class="px" viewBox="0 0 14 11" style="left:512.5px;top:198.9px;width:14px;height:11px"><rect width="14" height="11" rx="1.300" fill="#1c86f0"/><path d="M1.300 2.200 7 6.200l5.700-4" fill="none" stroke="#fff" stroke-width="1.300" stroke-linecap="round" stroke-linejoin="round"/></svg><span class="tx" id="e3a" style="left:535.9px;top:194.5px;">jon</span><i class="px" style="left:567.9px;top:200.8px;width:10.2px;height:9.6px;background:#8c8c8c"></i><i class="px" style="left:588.4px;top:200.8px;width:10.2px;height:9.6px;background:#ededed"></i><i class="px" style="left:598.6px;top:200.8px;width:20.2px;height:9.6px;background:#383d42"></i><i class="px" style="left:629.1px;top:200.8px;width:10.3px;height:9.6px;background:#383d42"></i><i class="px" style="left:639.4px;top:200.8px;width:10.3px;height:9.6px;background:#9a9a9a"></i><i class="px" style="left:649.7px;top:200.8px;width:10.3px;height:9.6px;background:#e2e2e2"></i><i class="px" style="left:660.0px;top:200.8px;width:10.0px;height:9.6px;background:#bcbcbc"></i><i class="px" style="left:701.1px;top:200.8px;width:10.3px;height:9.6px;background:#d4d4d4"></i><i class="px" style="left:711.4px;top:200.8px;width:10.3px;height:9.6px;background:#7c7c7c"></i><i class="px" style="left:721.7px;top:200.8px;width:10.0px;height:9.6px;background:#4c4c4c"></i><i class="px" style="left:742.0px;top:200.8px;width:10.3px;height:9.6px;background:#bababa"></i><i class="px" style="left:752.3px;top:200.8px;width:8.7px;height:9.6px;background:#f2f2f2"></i><i class="px" style="left:639.4px;top:210.4px;width:10.3px;height:4.1px;background:#c6c6c6"></i><span class="tx" id="c3a" style="left:834.9px;top:182.0px;">Aug 15 2024</span><span class="tx bl" id="c3b" style="left:839.1px;top:205.2px;">01:01 PM</span><span class="tx bl sm" id="c3c" style="left:916.3px;top:206.6px">(EDT)</span><svg class="px" viewBox="0 0 14 11" style="left:997.7px;top:197.9px;width:14px;height:11px"><rect width="14" height="11" rx="1.300" fill="#1c86f0"/><path d="M1.300 2.200 7 6.200l5.700-4" fill="none" stroke="#fff" stroke-width="1.300" stroke-linecap="round" stroke-linejoin="round"/></svg><svg class="srt" viewBox="0 0 12 16" style="left:139.4px"><path d="M6 .4 11.600 7H.4z" fill="#cfcfcf"/><path d="M6 15.600 11.600 9.600H.4z" fill="#cfcfcf"/></svg><svg class="srt" viewBox="0 0 12 16" style="left:332.0px"><path d="M6 .4 11.600 7H.4z" fill="#cfcfcf"/><path d="M6 15.600 11.600 9.600H.4z" fill="#cfcfcf"/></svg><svg class="srt" viewBox="0 0 12 16" style="left:550.7px"><path d="M6 .4 11.600 7H.4z" fill="#cfcfcf"/><path d="M6 15.600 11.600 9.600H.4z" fill="#cfcfcf"/></svg><svg class="srt" viewBox="0 0 12 16" style="left:899.6px"><path d="M6 .4 11.600 7H.4z" fill="#cfcfcf"/><path d="M6 15.600 11.600 9.600H.4z" fill="#cfcfcf"/></svg><svg class="srt" viewBox="0 0 12 16" style="left:1086.6px"><path d="M6 .4 11.600 7H.4z" fill="#cfcfcf"/><path d="M6 15.600 11.600 9.600H.4z" fill="#cfcfcf"/></svg>
</div>
<div id="tblx"><span class="tx" id="la3" style="left:1021.9px;top:194.1px;">6 months ago</span><span class="tot" style="top:-1.800px">Total 3 records | 1 of 1 Pages</span><span class="tot" style="top:228.500px">Total 3 records | 1 of 1 Pages</span></div>
<div class="hl2"></div>

<div class="px" style="left:269px;top:4px;width:1131px;height:3px;background:linear-gradient(#8a8a8a 0,#8a8a8a 33%,#e3e3e3 33%,#e3e3e3 66%,#c9c9c9 66%);z-index:49"></div><div class="px" style="left:269px;top:5px;width:1px;height:942px;background:#d3d3d3;z-index:3"></div><div class="px" style="left:0;top:4px;width:269px;height:2px;background:linear-gradient(#151515 50%,#2e2e2e 50%)"></div>
<div id="topbar"></div>
</div>
</body>
</html>
